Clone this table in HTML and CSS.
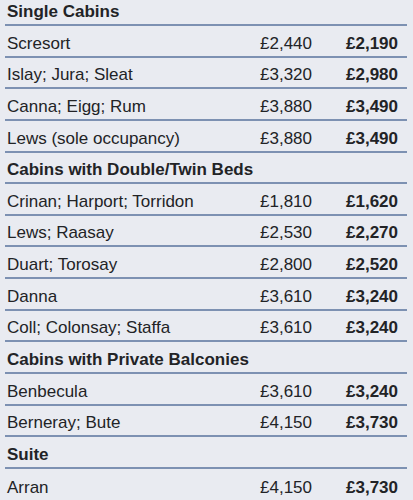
FILE: index.html
```html
<!DOCTYPE html>
<html>
<head>
<meta charset="utf-8">
<link rel="stylesheet" href="styles.css">
</head>
<body>
<div class="table">
  <div class="row head"><span class="name">Single Cabins</span></div>
  <div class="row"><span class="name">Scresort</span><span class="old">£2,440</span><span class="new">£2,190</span></div>
  <div class="row"><span class="name">Islay; Jura; Sleat</span><span class="old">£3,320</span><span class="new">£2,980</span></div>
  <div class="row"><span class="name">Canna; Eigg; Rum</span><span class="old">£3,880</span><span class="new">£3,490</span></div>
  <div class="row"><span class="name">Lews (sole occupancy)</span><span class="old">£3,880</span><span class="new">£3,490</span></div>
  <div class="row head"><span class="name">Cabins with Double/Twin Beds</span></div>
  <div class="row"><span class="name">Crinan; Harport; Torridon</span><span class="old">£1,810</span><span class="new">£1,620</span></div>
  <div class="row"><span class="name">Lews; Raasay</span><span class="old">£2,530</span><span class="new">£2,270</span></div>
  <div class="row"><span class="name">Duart; Torosay</span><span class="old">£2,800</span><span class="new">£2,520</span></div>
  <div class="row"><span class="name">Danna</span><span class="old">£3,610</span><span class="new">£3,240</span></div>
  <div class="row"><span class="name">Coll; Colonsay; Staffa</span><span class="old">£3,610</span><span class="new">£3,240</span></div>
  <div class="row head"><span class="name">Cabins with Private Balconies</span></div>
  <div class="row"><span class="name">Benbecula</span><span class="old">£3,610</span><span class="new">£3,240</span></div>
  <div class="row"><span class="name">Berneray; Bute</span><span class="old">£4,150</span><span class="new">£3,730</span></div>
  <div class="row head"><span class="name">Suite</span></div>
  <div class="row last"><span class="name">Arran</span><span class="old">£4,150</span><span class="new">£3,730</span></div>
</div>
</body>
</html>
```
FILE: styles.css
```css
html, body {
  margin: 0;
  padding: 0;
  background: #e9ebf1;
}
body {
  font-family: "Liberation Sans", Arial, sans-serif;
  font-size: 17px;
  color: #222326;
  overflow: hidden;
}
.table {
  margin: -5.6px 6px 0 5px;
  display: flex;
  flex-direction: column;
}
.row {
  display: grid;
  grid-template-columns: 1fr auto 86px;
  align-items: end;
  height: 31.64px;
  box-sizing: border-box;
  border-bottom: 2px solid #7d91b2;
  padding: 0 9px 3px 2px;
  line-height: 19px;
}
.row.last {
  border-bottom: none;
}
.head .name {
  font-weight: bold;
}
.old {
  text-align: right;
}
.new {
  text-align: right;
  font-weight: bold;
}
```
